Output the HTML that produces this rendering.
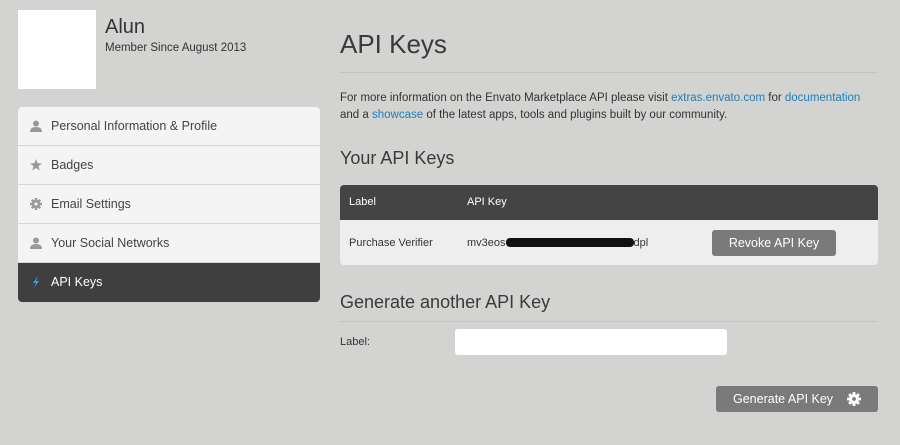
<!DOCTYPE html>
<html><head><style>
body{margin:0;width:900px;height:445px;background:#d3d3d2;font-family:"Liberation Sans",sans-serif;color:#333;position:relative;overflow:hidden}
.a{position:absolute}
.nav{left:18px;top:107px;width:302px;height:195px;border-radius:4px;overflow:hidden;background:#f4f4f4}
.row{height:38px;border-bottom:1px solid #d6d6d6;font-size:12.5px;color:#444;line-height:38px;padding-left:33px;position:relative}
.row svg{position:absolute;left:12px;top:13px}
.row.on{background:#3f3f3f;color:#fff;border:none;height:39px}
.hr{height:1px;background:#c4c4c4;left:340px;width:538px}
a{color:#1e7fb8;text-decoration:none}
.btn{background:#7a7a7a;color:#fff;border-radius:3px;font-size:12.5px;text-align:center}
</style></head><body>
<div class="a" style="left:18px;top:10px;width:78px;height:79px;background:#fff"></div>
<div class="a" style="left:105px;top:16px;font-size:20px;color:#333">Alun</div>
<div class="a" style="left:105px;top:42px;font-size:11.5px;color:#333">Member Since August 2013</div>
<div class="a nav">
<div class="row"><svg width="12" height="12" viewBox="0 0 12 12"><circle cx="6" cy="3.5" r="3" fill="#999"/><path d="M0 12 Q0 7 6 7 Q12 7 12 12Z" fill="#999"/></svg>Personal Information &amp; Profile</div>
<div class="row"><svg width="12" height="12" viewBox="0 0 12 12"><path d="M6 0 L7.6 4.2 L12 4.4 L8.5 7.1 L9.7 11.5 L6 9 L2.3 11.5 L3.5 7.1 L0 4.4 L4.4 4.2Z" fill="#999"/></svg>Badges</div>
<div class="row"><svg width="12" height="12" viewBox="0 0 12 12"><circle cx="6" cy="6" r="4.2" fill="#999"/><g stroke="#999" stroke-width="2.4"><path d="M6 0v12M0 6h12M1.8 1.8l8.4 8.4M10.2 1.8l-8.4 8.4"/></g><circle cx="6" cy="6" r="1.6" fill="#f4f4f4"/></svg>Email Settings</div>
<div class="row"><svg width="12" height="12" viewBox="0 0 12 12"><circle cx="6" cy="3.5" r="3" fill="#999"/><path d="M0 12 Q0 7 6 7 Q12 7 12 12Z" fill="#999"/></svg>Your Social Networks</div>
<div class="row on"><svg width="12" height="12" viewBox="0 0 12 12"><path d="M8 0 L3 7 L6 7 L4 12 L9 5 L6 5Z" fill="#2aa6e0"/></svg>API Keys</div>
</div>
<div class="a" style="left:340px;top:29px;font-size:26px;color:#3a3a3a">API Keys</div>
<div class="a hr" style="top:72px"></div>
<div class="a" style="left:340px;top:90px;font-size:11.5px;line-height:17px;color:#333;white-space:nowrap">For more information on the Envato Marketplace API please visit <a>extras.envato.com</a> for <a>documentation</a><br>and a <a>showcase</a> of the latest apps, tools and plugins built by our community.</div>
<div class="a" style="left:340px;top:148px;font-size:18px;color:#3a3a3a">Your API Keys</div>
<div class="a" style="left:340px;top:185px;width:538px;height:80px;border-radius:4px;overflow:hidden;background:#eee">
<div style="height:35px;background:#444;color:#fff;font-size:11px;line-height:35px;position:relative"><span class="a" style="left:9px">Label</span><span class="a" style="left:127px">API Key</span></div>
<div class="a" style="left:9px;top:52px;font-size:11px;color:#333">Purchase Verifier</div>
<div class="a" style="left:127px;top:52px;font-size:11px;color:#333">mv3eos<span style="display:inline-block;width:128px;height:9px;background:#111;border-radius:4px;vertical-align:-1px"></span>dpl</div>
<div class="a btn" style="left:372px;top:45px;width:124px;height:26px;line-height:26px">Revoke API Key</div>
</div>
<div class="a" style="left:340px;top:292px;font-size:18px;color:#3a3a3a">Generate another API Key</div>
<div class="a hr" style="top:321px"></div>
<div class="a" style="left:340px;top:336px;font-size:11px">Label:</div>
<div class="a" style="left:455px;top:329px;width:272px;height:26px;background:#fff;border-radius:3px"></div>
<div class="a btn" style="left:716px;top:386px;width:162px;height:26px;line-height:26px;text-align:left"><span style="margin-left:17px">Generate API Key</span>
<svg class="a" style="left:131px;top:6px" width="14" height="14" viewBox="0 0 12 12"><circle cx="6" cy="6" r="4.2" fill="#fff"/><g stroke="#fff" stroke-width="2.4"><path d="M6 0v12M0 6h12M1.8 1.8l8.4 8.4M10.2 1.8l-8.4 8.4"/></g><circle cx="6" cy="6" r="1.6" fill="#7a7a7a"/></svg></div>
</body></html>
